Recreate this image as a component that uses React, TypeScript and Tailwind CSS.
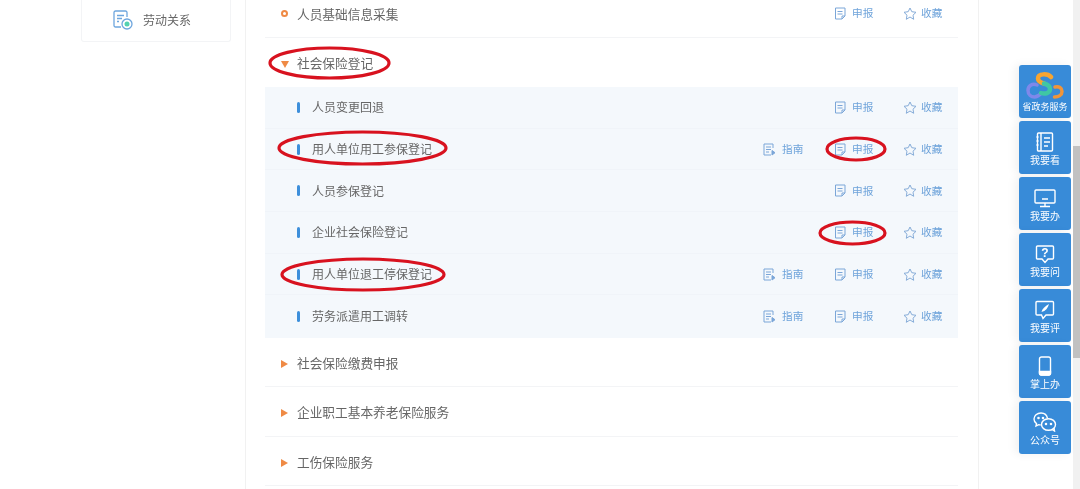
const font = { fontFamily: '"Noto Sans CJK SC", "Liberation Sans", sans-serif' };

function ReportIcon() {
  return (
    <svg width="13" height="13" viewBox="0 0 13 13" fill="none" stroke="#7ba6d8" strokeWidth="1" className="shrink-0">
      <path d="M1.500 1h9.500v8l-3 3h-6.500z" />
      <path d="M11 9H8v3" />
      <path d="M3.500 4.500h5M3.500 7h5" />
    </svg>
  );
}

function GuideIcon() {
  return (
    <svg width="13" height="13" viewBox="0 0 13 13" fill="none" stroke="#7ba6d8" strokeWidth="1" className="shrink-0">
      <path d="M10 5V1H1v11h7" />
      <path d="M3 4h5M3 6.500h5M3 9h3" />
      <path d="M9 7.500l3 2.200-3 2.300z" fill="#7ba6d8" />
    </svg>
  );
}

function StarIcon() {
  return (
    <svg width="14" height="13" viewBox="0 0 14 13" fill="none" stroke="#86acd8" strokeWidth="1" strokeLinejoin="round" className="shrink-0">
      <path d="M7 1l1.800 3.700 4.200.6-3 2.900.7 4.100L7 10l-3.700 2.300.7-4.100-3-2.900 4.200-.6z" />
    </svg>
  );
}

function Actions({ guide }: { guide?: boolean }) {
  return (
    <div className="flex items-center pr-[15px] text-[10.700px] text-[#6ea3da]">
      {guide && (
        <div className="flex w-[71px] items-center gap-[6px]">
          <GuideIcon />
          <span>指南</span>
        </div>
      )}
      <div className="flex w-[69px] items-center gap-[5px]">
        <ReportIcon />
        <span>申报</span>
      </div>
      <div className="flex w-[40px] items-center gap-[4px]">
        <StarIcon />
        <span className="whitespace-nowrap">收藏</span>
      </div>
    </div>
  );
}

function Triangle({ open }: { open?: boolean }) {
  return open ? (
    <span className="ml-[1px] mr-[8px] mt-[3px] h-0 w-0 border-x-[4px] border-t-[7px] border-x-transparent border-t-[#ef8a45]" />
  ) : (
    <span className="ml-[1px] mr-[9px] mt-[3px] h-0 w-0 border-y-[4px] border-l-[7px] border-y-transparent border-l-[#ef8a45]" />
  );
}

const subRows: { name: string; guide?: boolean }[] = [
  { name: "人员变更回退" },
  { name: "用人单位用工参保登记", guide: true },
  { name: "人员参保登记" },
  { name: "企业社会保险登记" },
  { name: "用人单位退工停保登记", guide: true },
  { name: "劳务派遣用工调转", guide: true },
];

const sideItems = ["我要看", "我要办", "我要问", "我要评", "掌上办", "公众号"];

function SideIcon({ i }: { i: number }) {
  const p = { fill: "none", stroke: "#fff", strokeWidth: 1.4 };
  if (i === 0)
    return (
      <svg width="18" height="20" viewBox="0 0 18 20" {...p}>
        <rect x="1.500" y="1" width="15" height="18" rx="1" />
        <path d="M5 1v18M8 6h6M8 10h6M8 14h4M.5 5h2M.5 9h2M.5 13h2" />
      </svg>
    );
  if (i === 1)
    return (
      <svg width="22" height="19" viewBox="0 0 22 19" {...p}>
        <rect x="1" y="1" width="20" height="13" rx="1" />
        <path d="M11 14v3M6 17.500h10M8 10h6" />
      </svg>
    );
  if (i === 2)
    return (
      <svg width="20" height="19" viewBox="0 0 20 19" {...p}>
        <path d="M2.500 1h15a1 1 0 0 1 1 1v11a1 1 0 0 1-1 1h-4.500l-3 3.500-3-3.500h-4.500a1 1 0 0 1-1-1V2a1 1 0 0 1 1-1z" />
        <text x="10" y="12" fontSize="12" fontWeight="700" fill="#fff" stroke="none" textAnchor="middle" fontFamily="Liberation Sans">?</text>
      </svg>
    );
  if (i === 3)
    return (
      <svg width="20" height="20" viewBox="0 0 20 20" {...p}>
        <path d="M2.500 1.500h15a1 1 0 0 1 1 1v11.500a1 1 0 0 1-1 1h-6.500l-3 3.500-1.500-3.500h-4.500a1 1 0 0 1-1-1V2.500a1 1 0 0 1 1-1z" />
        <path d="M6.500 12c.5-3 3.500-6 7.500-8-1 4-3.500 7-7.500 8z" fill="#fff" stroke="none" />
      </svg>
    );
  if (i === 4)
    return (
      <svg width="14" height="20" viewBox="0 0 14 20" {...p}>
        <rect x="1.500" y="1" width="11" height="18" rx="2" />
        <path d="M1.500 15.500h11v2a1.500 1.500 0 0 1-1.500 1.500H3a1.500 1.500 0 0 1-1.500-1.500z" fill="#fff" />
      </svg>
    );
  return (
    <svg width="24" height="20" viewBox="0 0 24 20" {...p}>
      <path d="M14.500 6.500C14 3.500 11.500 1 8 1 4 1 1 3.700 1 7c0 2 1 3.500 2.500 4.600L3 14l2.700-1.300c.7.2 1.300.3 2 .3" />
      <ellipse cx="15.500" cy="12.500" rx="7" ry="5.800" />
      <path d="M21 16l.5 3-2.500-1.600" />
      <circle cx="5.500" cy="6" r=".6" fill="#fff" />
      <circle cx="10" cy="6" r=".6" fill="#fff" />
      <circle cx="13" cy="12" r=".6" fill="#fff" />
      <circle cx="18" cy="12" r=".6" fill="#fff" />
    </svg>
  );
}

function Ellipse({ x, y, w, h }: { x: number; y: number; w: number; h: number }) {
  return (
    <svg className="pointer-events-none absolute" style={{ left: x, top: y }} width={w} height={h}>
      <ellipse cx={w / 2} cy={h / 2} rx={w / 2 - 2} ry={h / 2 - 2} fill="none" stroke="#d8121f" strokeWidth="3.200" />
    </svg>
  );
}

function Logo() {
  return (
    <svg width="38" height="27" viewBox="0 0 38 27" fill="none" strokeLinecap="round">
      <path d="M11 13C6 11 2 14 2 18.500S5.500 25 8.500 25 13 23.500 15 21.500" stroke="#7f88ea" strokeWidth="3.500" />
      <path d="M29 15c4-1 7 1 7 4.500S32.500 25 28.500 25" stroke="#f0953a" strokeWidth="3.500" />
      <path d="M25 5C22 1.500 12 1 12 6.500c0 2.500 2.500 4 6 5" stroke="#f7a531" strokeWidth="4.500" />
      <path d="M18 11.500c3.500 1 6 3 6 5.500 0 4-5 5.500-9 4" stroke="#3fc7a4" strokeWidth="4.500" />
    </svg>
  );
}

export default function App() {
  return (
    <div className="relative flex h-[489px] w-[1080px] overflow-hidden bg-white text-[#666] blur-[0.3px]" style={font}>
      <div className="ml-[81px] w-[150px] shrink-0">
        <div className="flex h-[42px] items-center rounded-b-[3px] border border-t-0 border-[#f3f4f6] pb-[2px] pl-[31px]">
          <svg width="20" height="20" viewBox="0 0 20 20" fill="none" stroke="#6ea6de" strokeWidth="1.300" className="shrink-0">
            <path d="M8 17H2.500a1.500 1.500 0 0 1-1.500-1.500V2.500A1.500 1.500 0 0 1 2.500 1h10A1.500 1.500 0 0 1 14 2.500V7" />
            <path d="M4 5.500h7M4 8.500h5M4 11.500h2" />
            <circle cx="14" cy="14" r="5" />
            <circle cx="14" cy="14" r="2.500" fill="#54d1b0" stroke="none" />
          </svg>
          <span className="ml-[10px] whitespace-nowrap text-[12px]">劳动关系</span>
        </div>
      </div>

      <div className="ml-[14px] h-full w-[734px] shrink-0 border-x border-[#f1f1f1] pl-[19px] pr-[20px]">
        <div className="flex h-[38px] items-center justify-between border-b border-[#f3f4f6] pb-[10px]">
          <div className="flex items-center pl-[16px] text-[12.700px]">
            <span className="mr-[9px] h-[7px] w-[7px] rounded-full border-2 border-[#ef8a45]" />
            人员基础信息采集
          </div>
          <Actions />
        </div>

        <div className="flex h-[49px] items-center pl-[15px] text-[12.700px]">
          <Triangle open />
          社会保险登记
        </div>

        <div className="flex h-[251px] flex-col bg-[#f4f8fc] pb-[1px]">
          {subRows.map((r) => (
            <div key={r.name} className="flex h-[41.700px] items-center justify-between border-b border-[#f0f4f9] last:border-b-0">
              <div className="flex items-center pl-[32px] text-[12px]">
                <span className="mr-[12px] h-[11px] w-[3px] rounded-[2px] bg-[#3d8fdb]" />
                {r.name}
              </div>
              <Actions guide={r.guide} />
            </div>
          ))}
        </div>

        {["社会保险缴费申报", "企业职工基本养老保险服务", "工伤保险服务"].map((t) => (
          <div key={t} className="flex h-[49.300px] items-center border-b border-[#f3f4f6] pl-[15px] pt-[1px] text-[12.700px]">
            <Triangle />
            {t}
          </div>
        ))}
      </div>

      {/* scrollbar */}
      <div className="absolute right-0 top-0 h-full w-[7px] bg-[#f1f1f1]">
        <div className="mt-[146px] h-[212px] bg-[#c1c1c1]" />
      </div>

      {/* floating service bar */}
      <div className="absolute left-[1019px] top-[65px] flex w-[52px] flex-col gap-[3.500px] text-white">
        <div className="flex h-[52.500px] flex-col items-center justify-end rounded-[3px] bg-[#388bd8] pb-[5px] shadow-[-4px_0_10px_rgba(0,0,0,0.06)]">
          <Logo />
          <span className="mt-[2px] whitespace-nowrap text-[9px] leading-[12px]">省政务服务</span>
        </div>
        {sideItems.map((t, i) => (
          <div key={t} className="flex h-[52.500px] flex-col items-center justify-end rounded-[3px] bg-[#388bd8] pb-[8px] shadow-[-4px_0_10px_rgba(0,0,0,0.06)]">
            <SideIcon i={i} />
            <span className="mt-[1px] whitespace-nowrap text-[10px] leading-[13px]">{t}</span>
          </div>
        ))}
      </div>

      <Ellipse x={268} y={46} w={123} h={34} />
      <Ellipse x={277} y={130} w={171} h={36} />
      <Ellipse x={825} y={136} w={62} h={26} />
      <Ellipse x={818} y={220} w={69} h={26} />
      <Ellipse x={280} y={257} w={166} h={35} />
    </div>
  );
}
